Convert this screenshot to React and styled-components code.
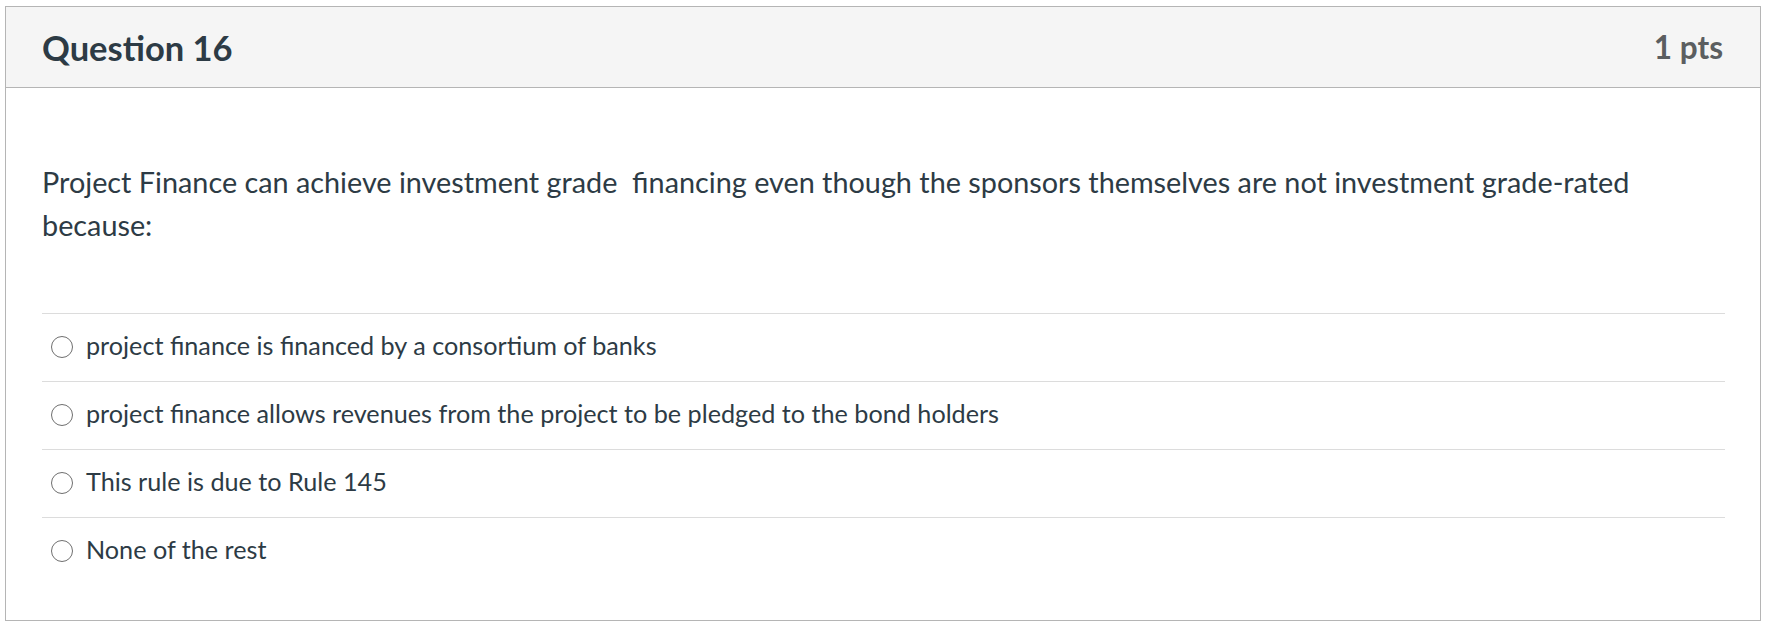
import React from 'react'
import styled, { createGlobalStyle } from 'styled-components'

const GlobalStyle = createGlobalStyle`
  body {
    margin: 0;
    background: #ffffff;
    font-family: Lato, "Open Sans", sans-serif;
    color: #2d3b45;
  }
`

const Page = styled.div`
  padding: 6px 5px;
`

const Card = styled.section`
  border: 1px solid #b5b5b5;
  background: #ffffff;
`

const Header = styled.header`
  display: flex;
  align-items: center;
  justify-content: space-between;
  height: 80px;
  padding: 0 37px 0 36px;
  background: #f5f5f5;
  border-bottom: 1px solid #b5b5b5;
`

const Title = styled.h2`
  margin: 0;
  font-size: 34.5px;
  font-weight: 700;
  color: #2d3b45;
`

const Points = styled.div`
  font-size: 31.5px;
  font-weight: 700;
  color: #5b5e60;
`

const Body = styled.div`
  padding: 73px 35px 35px 36px;
`

const QuestionText = styled.p`
  margin: 0 0 66px 0;
  font-size: 28.8px;
  line-height: 43px;
`

const Answers = styled.ul`
  list-style: none;
  margin: 0;
  padding: 0;
`

const Answer = styled.li`
  box-sizing: border-box;
  display: flex;
  align-items: center;
  height: 68px;
  padding-bottom: 5px;
  border-top: 1px solid #dcdcdc;
  font-size: 25.2px;
`

const Radio = styled.span`
  box-sizing: border-box;
  width: 22px;
  height: 22px;
  margin: 4px 13px 0 9px;
  border: 1.8px solid #6f6f6f;
  border-radius: 50%;
  flex: none;
`

const answers = [
  'project finance is financed by a consortium of banks',
  'project finance allows revenues from the project to be pledged to the bond holders',
  'This rule is due to Rule 145',
  'None of the rest',
]

export default function App() {
  return (
    <>
      <GlobalStyle />
      <Page>
        <Card>
          <Header>
            <Title>Question 16</Title>
            <Points>1 pts</Points>
          </Header>
          <Body>
            <QuestionText>
              Project Finance can achieve investment grade&nbsp; financing even though the sponsors themselves are not investment grade-rated because:
            </QuestionText>
            <Answers>
              {answers.map(answer => (
                <Answer key={answer}>
                  <Radio />
                  {answer}
                </Answer>
              ))}
            </Answers>
          </Body>
        </Card>
      </Page>
    </>
  )
}
